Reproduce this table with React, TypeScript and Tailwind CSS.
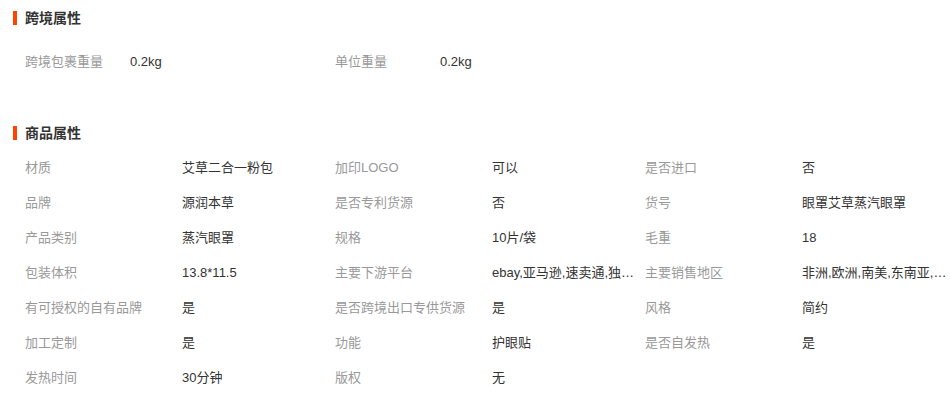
const crossBorder = [
  { label: "跨境包裹重量", value: "0.2kg" },
  { label: "单位重量", value: "0.2kg" },
];

const attrs = [
  { label: "材质", value: "艾草二合一粉包" },
  { label: "加印LOGO", value: "可以" },
  { label: "是否进口", value: "否" },
  { label: "品牌", value: "源润本草" },
  { label: "是否专利货源", value: "否" },
  { label: "货号", value: "眼罩艾草蒸汽眼罩" },
  { label: "产品类别", value: "蒸汽眼罩" },
  { label: "规格", value: "10片/袋" },
  { label: "毛重", value: "18" },
  { label: "包装体积", value: "13.8*11.5" },
  { label: "主要下游平台", value: "ebay,亚马逊,速卖通,独立站,LAZADA,wish" },
  { label: "主要销售地区", value: "非洲,欧洲,南美,东南亚,北美,东北亚,中东" },
  { label: "有可授权的自有品牌", value: "是" },
  { label: "是否跨境出口专供货源", value: "是" },
  { label: "风格", value: "简约" },
  { label: "加工定制", value: "是" },
  { label: "功能", value: "护眼贴" },
  { label: "是否自发热", value: "是" },
  { label: "发热时间", value: "30分钟" },
  { label: "版权", value: "无" },
];

function SectionTitle({ title, className }: { title: string; className?: string }) {
  return (
    <div className={`flex items-center h-5 ${className ?? ""}`}>
      <span className="w-[4px] h-[14px] bg-[#ff4400] mr-[8px]" />
      <span className="text-[14px] font-bold text-[#333]">{title}</span>
    </div>
  );
}

export default function App() {
  return (
    <div
      className="w-[950px] h-[394px] bg-white pl-[13px] overflow-hidden"
      style={{ fontFamily: '"Liberation Sans", "Noto Sans CJK SC", sans-serif' }}
    >
      <SectionTitle title="跨境属性" className="mt-[8px]" />
      <div className="grid grid-cols-[310px_310px] pl-[12px] pt-[16px] text-[13px]">
        {crossBorder.map((item) => (
          <div key={item.label} className="flex items-center h-[35px]">
            <span className="w-[105px] text-[#999]">{item.label}</span>
            <span className="text-[#333]">{item.value}</span>
          </div>
        ))}
      </div>

      <SectionTitle title="商品属性" className="mt-[44px]" />
      <div className="grid grid-cols-[310px_310px_310px] pl-[12px] pt-[7px] text-[13px]">
        {attrs.map((item) => (
          <div key={item.label} className="flex items-center h-[35px]">
            <span className="w-[157px] shrink-0 text-[#999] whitespace-nowrap">{item.label}</span>
            <span className="w-[146px] text-[#333] truncate">{item.value}</span>
          </div>
        ))}
      </div>
    </div>
  );
}
